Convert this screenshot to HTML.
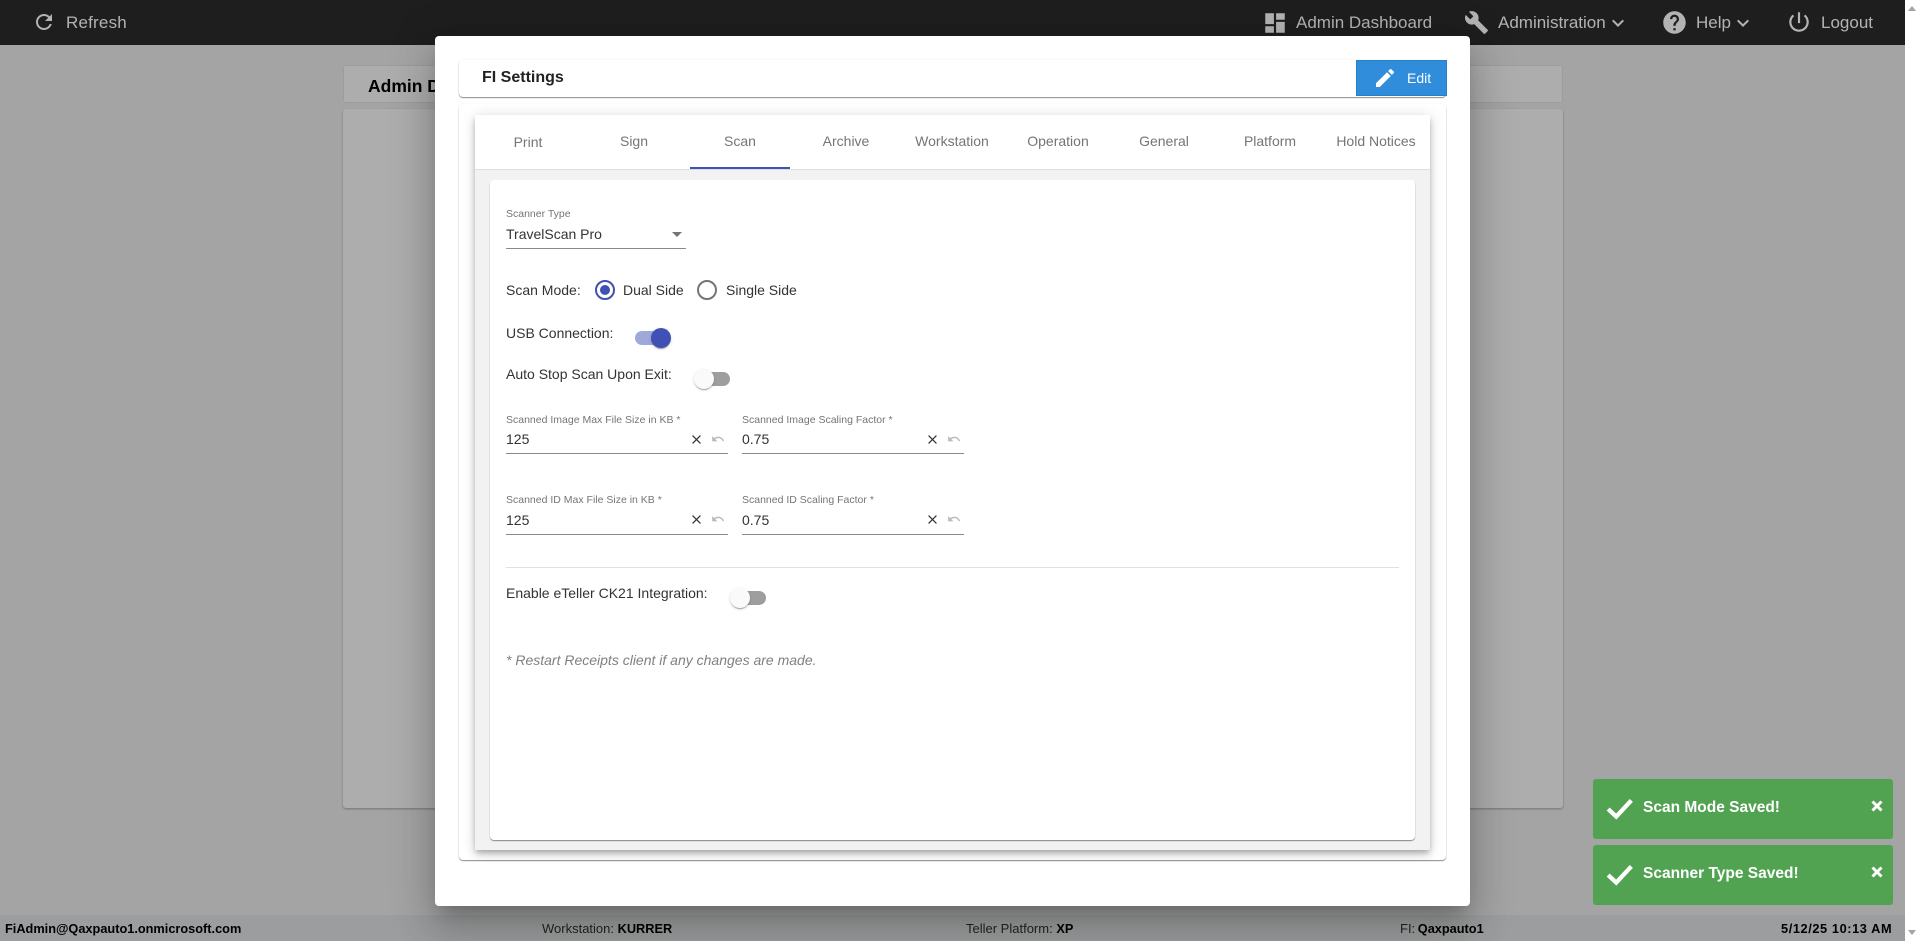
<!DOCTYPE html>
<html><head><meta charset="utf-8"><title>FI Settings</title>
<style>
*{box-sizing:border-box}
html,body{margin:0;padding:0;width:1920px;height:941px;overflow:hidden;background:#fff;font-family:"Liberation Sans",Arial,sans-serif}
.a{position:absolute}
.t{position:absolute;line-height:20px;height:20px;white-space:nowrap}
svg{position:absolute;display:block}
.nav{color:#b3b3b3;font-size:17px}
.tab{position:absolute;top:115px;width:106px;height:54px;line-height:53px;text-align:center;font-size:14px;color:#757575}
.lab{font-size:10.5px;color:#757575}
.val{font-size:14px;color:#333}
.txt{font-size:14px;color:#333}
.ul{position:absolute;height:1px;background:#8a8a8a}
.track{position:absolute;width:34px;height:14px;border-radius:7px}
.thumb{position:absolute;width:20px;height:20px;border-radius:50%;box-shadow:0 2px 1px -1px rgba(0,0,0,.2),0 1px 1px 0 rgba(0,0,0,.14),0 1px 3px 0 rgba(0,0,0,.12)}
.foot{font-size:13px;color:#222}
.foot b{color:#000;font-size:12.75px}
.toast{position:absolute;left:1593px;width:300px;height:60px;background:#51a351;border-radius:3px}
.toast .m{position:absolute;left:50px;top:19px;line-height:20px;color:#fff;font-weight:bold;font-size:15.5px;white-space:nowrap}
</style></head><body>

<!-- backdrop page -->
<div class="a" style="left:0;top:0;width:1905px;height:941px;background:#a4a4a4"></div>
<div class="a" style="left:0;top:0;width:1905px;height:45px;background:#1e1e1e"></div>
<div class="a" style="left:343px;top:65px;width:1220px;height:38px;background:#adadad;border:1px solid #9c9c9c;border-radius:3px"></div>
<div class="t" style="left:368px;top:76px;font-size:17.5px;font-weight:bold;color:#000">Admin Dashboard</div>
<div class="a" style="left:343px;top:109px;width:1220px;height:699px;background:#adadad;border-radius:3px;box-shadow:0 1px 2px rgba(0,0,0,.3)"></div>
<div class="a" style="left:0;top:915px;width:1905px;height:26px;background:#9c9d9e"></div>

<!-- scrollbar -->
<div class="a" style="left:1905px;top:0;width:15px;height:941px;background:#fff"></div>
<div class="a" style="left:1908px;top:6px;width:0;height:0;border-left:4.5px solid transparent;border-right:4.5px solid transparent;border-bottom:5px solid #a3a3a3"></div>
<div class="a" style="left:1908px;top:930px;width:0;height:0;border-left:4.5px solid transparent;border-right:4.5px solid transparent;border-top:5px solid #a3a3a3"></div>

<!-- nav -->
<svg style="left:32px;top:10px" width="24" height="24" viewBox="0 0 24 24" fill="#b3b3b3"><path d="M17.65 6.35C16.2 4.9 14.21 4 12 4c-4.42 0-7.99 3.58-7.99 8s3.57 8 7.99 8c3.73 0 6.84-2.55 7.73-6h-2.08c-.82 2.33-3.04 4-5.65 4-3.31 0-6-2.69-6-6s2.69-6 6-6c1.66 0 3.14.69 4.22 1.78L13 11h7V4l-2.35 2.35z"/></svg>
<div class="t nav" style="left:66px;top:13px;letter-spacing:.2px">Refresh</div>
<svg style="left:1262px;top:10px" width="26" height="26" viewBox="0 0 24 24" fill="#b3b3b3"><path d="M3 13h8V3H3v10zm0 8h8v-6H3v6zm10 0h8V11h-8v10zm0-18v6h8V3h-8z"/></svg>
<div class="t nav" style="left:1296px;top:13px">Admin Dashboard</div>
<svg style="left:1464px;top:10px" width="25" height="25" viewBox="0 0 24 24" fill="#b3b3b3"><path d="M22.7 19l-9.1-9.1c.9-2.3.4-5-1.5-6.9-2-2-5-2.4-7.4-1.3L9 6 6 9 1.6 4.7C.4 7.1.9 10.1 2.9 12.1c1.9 1.9 4.6 2.4 6.9 1.5l9.1 9.1c.4.4 1 .4 1.4 0l2.3-2.3c.5-.4.5-1.1.1-1.4z"/></svg>
<div class="t nav" style="left:1498px;top:13px">Administration</div>
<svg style="left:1606px;top:11px" width="24" height="24" viewBox="0 0 24 24" fill="#b3b3b3"><path d="M7.41 8.59L12 13.17l4.59-4.58L18 10l-6 6-6-6z"/></svg>
<svg style="left:1661px;top:9px" width="27" height="27" viewBox="0 0 24 24" fill="#b3b3b3"><path d="M12 2C6.48 2 2 6.48 2 12s4.48 10 10 10 10-4.48 10-10S17.52 2 12 2zm1 17h-2v-2h2v2zm2.07-7.75l-.9.92C13.45 12.9 13 13.5 13 15h-2v-.5c0-1.1.45-2.1 1.17-2.83l1.24-1.26c.37-.36.59-.86.59-1.41 0-1.1-.9-2-2-2s-2 .9-2 2H8c0-2.21 1.79-4 4-4s4 1.79 4 4c0 .88-.36 1.68-.93 2.25z"/></svg>
<div class="t nav" style="left:1696px;top:13px">Help</div>
<svg style="left:1731px;top:11px" width="24" height="24" viewBox="0 0 24 24" fill="#b3b3b3"><path d="M7.41 8.59L12 13.17l4.59-4.58L18 10l-6 6-6-6z"/></svg>
<svg style="left:1786px;top:9px" width="26" height="26" viewBox="0 0 24 24" fill="#b3b3b3"><path d="M13 3h-2v10h2V3zm4.83 2.17l-1.42 1.42C17.99 7.86 19 9.81 19 12c0 3.87-3.13 7-7 7s-7-3.13-7-7c0-2.19 1.01-4.14 2.58-5.42L6.17 5.17C4.23 6.82 3 9.26 3 12c0 4.97 4.03 9 9 9s9-4.03 9-9c0-2.74-1.23-5.18-3.17-6.83z"/></svg>
<div class="t nav" style="left:1821px;top:13px">Logout</div>

<!-- footer -->
<div class="t foot" style="left:5px;top:919px"><b>FiAdmin@Qaxpauto1.onmicrosoft.com</b></div>
<div class="t foot" style="left:542px;top:919px">Workstation: <b>KURRER</b></div>
<div class="t foot" style="left:966px;top:919px">Teller Platform: <b>XP</b></div>
<div class="t foot" style="left:1400px;top:919px;word-spacing:-1px">FI: <b>Qaxpauto1</b></div>
<div class="t foot" style="left:1781px;top:919px;letter-spacing:.6px"><b>5/12/25 10:13 AM</b></div>

<!-- toasts -->
<div class="toast" style="top:779px"><svg style="left:13px;top:15px" width="28" height="28" viewBox="0 0 26 26"><path d="M2 14l7.5 7L23.5 6" fill="none" stroke="#fff" stroke-width="4"/></svg><div class="m">Scan Mode Saved!</div><svg style="left:276px;top:20px" width="16" height="14" viewBox="0 0 16 14"><path d="M3.5 2.5l9 9M12.5 2.5l-9 9" stroke="#fff" stroke-width="3" fill="none"/></svg></div>
<div class="toast" style="top:845px"><svg style="left:13px;top:15px" width="28" height="28" viewBox="0 0 26 26"><path d="M2 14l7.5 7L23.5 6" fill="none" stroke="#fff" stroke-width="4"/></svg><div class="m">Scanner Type Saved!</div><svg style="left:276px;top:20px" width="16" height="14" viewBox="0 0 16 14"><path d="M3.5 2.5l9 9M12.5 2.5l-9 9" stroke="#fff" stroke-width="3" fill="none"/></svg></div>

<!-- modal -->
<div class="a" style="left:435px;top:36px;width:1035px;height:870px;background:#fff;border-radius:4px;box-shadow:0 11px 15px -7px rgba(0,0,0,.2),0 24px 38px 3px rgba(0,0,0,.14),0 9px 46px 8px rgba(0,0,0,.12)"></div>

<!-- header card -->
<div class="a" style="left:459px;top:60px;width:987px;height:37px;background:#fff;border-radius:4px;box-shadow:0 1px 1px rgba(0,0,0,.45),0 0 2px rgba(0,0,0,.06)"></div>
<div class="t" style="left:482px;top:68px;font-size:16px;font-weight:bold;color:#222">FI Settings</div>
<div class="a" style="left:1356px;top:60px;width:91px;height:36px;background:#2f8ddb;border:1px solid #2b7fc6"></div>
<svg style="left:1373px;top:66px" width="24" height="24" viewBox="0 0 24 24" fill="#fff"><path d="M3 17.25V21h3.75L17.81 9.94l-3.75-3.75L3 17.25zM20.71 7.04c.39-.39.39-1.02 0-1.41l-2.34-2.34c-.39-.39-1.02-.39-1.41 0l-1.83 1.83 3.75 3.75 1.83-1.83z"/></svg>
<div class="t" style="left:1407px;top:68px;font-size:14px;color:#fff">Edit</div>

<!-- outer card -->
<div class="a" style="left:459px;top:104px;width:987px;height:756px;background:#fff;border-radius:4px;box-shadow:0 1px 1px rgba(0,0,0,.45),0 0 2px rgba(0,0,0,.06)"></div>
<!-- tabs panel -->
<div class="a" style="left:475px;top:115px;width:955px;height:735px;background:#f2f2f2;box-shadow:0 3px 5px -1px rgba(0,0,0,.2),0 5px 8px 0 rgba(0,0,0,.14),0 1px 14px 0 rgba(0,0,0,.12)"></div>
<div class="a" style="left:475px;top:115px;width:955px;height:55px;background:#fff;border-bottom:1px solid #dedede"></div>
<div class="tab" style="left:475px;line-height:55px">Print</div>
<div class="tab" style="left:581px">Sign</div>
<div class="tab" style="left:687px">Scan</div>
<div class="tab" style="left:793px">Archive</div>
<div class="tab" style="left:899px">Workstation</div>
<div class="tab" style="left:1005px">Operation</div>
<div class="tab" style="left:1111px">General</div>
<div class="tab" style="left:1217px">Platform</div>
<div class="tab" style="left:1323px">Hold Notices</div>
<div class="a" style="left:690px;top:167px;width:100px;height:2px;background:#3f51b5"></div>

<!-- inner card -->
<div class="a" style="left:490px;top:180px;width:925px;height:660px;background:#fff;border-radius:4px;box-shadow:0 1px 1px rgba(0,0,0,.45)"></div>

<div class="t lab" style="left:506px;top:204px">Scanner Type</div>
<div class="t val" style="left:506px;top:224px">TravelScan Pro</div>
<div class="a" style="left:672px;top:232px;width:0;height:0;border-left:5px solid transparent;border-right:5px solid transparent;border-top:5px solid #757575"></div>
<div class="ul" style="left:506px;top:248px;width:180px"></div>

<div class="t txt" style="left:506px;top:280px">Scan Mode:</div>
<div class="a" style="left:595px;top:280px;width:20px;height:20px;border:2px solid #3f51b5;border-radius:50%"></div>
<div class="a" style="left:600px;top:285px;width:10px;height:10px;background:#3f51b5;border-radius:50%"></div>
<div class="t txt" style="left:623px;top:280px">Dual Side</div>
<div class="a" style="left:697px;top:280px;width:20px;height:20px;border:2px solid #757575;border-radius:50%"></div>
<div class="t txt" style="left:726px;top:280px">Single Side</div>

<div class="t txt" style="left:506px;top:323px">USB Connection:</div>
<div class="track" style="left:635px;top:331px;background:#9fa8da"></div>
<div class="thumb" style="left:651px;top:328px;background:#3f51b5"></div>

<div class="t txt" style="left:506px;top:364px">Auto Stop Scan Upon Exit:</div>
<div class="track" style="left:696px;top:372px;background:#9e9e9e"></div>
<div class="thumb" style="left:694px;top:369px;background:#fafafa"></div>

<!-- fields row 1 -->
<div class="t lab" style="left:506px;top:410px">Scanned Image Max File Size in KB *</div>
<div class="t val" style="left:506px;top:429px">125</div>
<svg style="left:689px;top:432px" width="15" height="15" viewBox="0 0 24 24" fill="#333"><path d="M19 6.41L17.59 5 12 10.59 6.41 5 5 6.41 10.59 12 5 17.59 6.41 19 12 13.41 17.59 19 19 17.59 13.41 12z"/></svg>
<svg style="left:711px;top:432px" width="14" height="14" viewBox="0 0 24 24" fill="#bbb"><path d="M12.5 8c-2.65 0-5.05.99-6.9 2.6L2 7v9h9l-3.62-3.62c1.39-1.16 3.16-1.88 5.12-1.88 3.54 0 6.55 2.31 7.6 5.5l2.37-.78C21.08 11.03 17.15 8 12.5 8z"/></svg>
<div class="ul" style="left:506px;top:453px;width:222px"></div>

<div class="t lab" style="left:742px;top:410px">Scanned Image Scaling Factor *</div>
<div class="t val" style="left:742px;top:429px">0.75</div>
<svg style="left:925px;top:432px" width="15" height="15" viewBox="0 0 24 24" fill="#333"><path d="M19 6.41L17.59 5 12 10.59 6.41 5 5 6.41 10.59 12 5 17.59 6.41 19 12 13.41 17.59 19 19 17.59 13.41 12z"/></svg>
<svg style="left:947px;top:432px" width="14" height="14" viewBox="0 0 24 24" fill="#bbb"><path d="M12.5 8c-2.65 0-5.05.99-6.9 2.6L2 7v9h9l-3.62-3.62c1.39-1.16 3.16-1.88 5.12-1.88 3.54 0 6.55 2.31 7.6 5.5l2.37-.78C21.08 11.03 17.15 8 12.5 8z"/></svg>
<div class="ul" style="left:742px;top:453px;width:222px"></div>

<!-- fields row 2 -->
<div class="t lab" style="left:506px;top:490px">Scanned ID Max File Size in KB *</div>
<div class="t val" style="left:506px;top:510px">125</div>
<svg style="left:689px;top:512px" width="15" height="15" viewBox="0 0 24 24" fill="#333"><path d="M19 6.41L17.59 5 12 10.59 6.41 5 5 6.41 10.59 12 5 17.59 6.41 19 12 13.41 17.59 19 19 17.59 13.41 12z"/></svg>
<svg style="left:711px;top:512px" width="14" height="14" viewBox="0 0 24 24" fill="#bbb"><path d="M12.5 8c-2.65 0-5.05.99-6.9 2.6L2 7v9h9l-3.62-3.62c1.39-1.16 3.16-1.88 5.12-1.88 3.54 0 6.55 2.31 7.6 5.5l2.37-.78C21.08 11.03 17.15 8 12.5 8z"/></svg>
<div class="ul" style="left:506px;top:534px;width:222px"></div>

<div class="t lab" style="left:742px;top:490px">Scanned ID Scaling Factor *</div>
<div class="t val" style="left:742px;top:510px">0.75</div>
<svg style="left:925px;top:512px" width="15" height="15" viewBox="0 0 24 24" fill="#333"><path d="M19 6.41L17.59 5 12 10.59 6.41 5 5 6.41 10.59 12 5 17.59 6.41 19 12 13.41 17.59 19 19 17.59 13.41 12z"/></svg>
<svg style="left:947px;top:512px" width="14" height="14" viewBox="0 0 24 24" fill="#bbb"><path d="M12.5 8c-2.65 0-5.05.99-6.9 2.6L2 7v9h9l-3.62-3.62c1.39-1.16 3.16-1.88 5.12-1.88 3.54 0 6.55 2.31 7.6 5.5l2.37-.78C21.08 11.03 17.15 8 12.5 8z"/></svg>
<div class="ul" style="left:742px;top:534px;width:222px"></div>

<div class="a" style="left:506px;top:567px;width:893px;height:1px;background:#e0e0e0"></div>

<div class="t txt" style="left:506px;top:583px">Enable eTeller CK21 Integration:</div>
<div class="track" style="left:732px;top:591px;background:#9e9e9e"></div>
<div class="thumb" style="left:730px;top:588px;background:#fafafa"></div>

<div class="t" style="left:506px;top:650px;font-size:14px;font-style:italic;color:#808080">* Restart Receipts client if any changes are made.</div>

</body></html>
